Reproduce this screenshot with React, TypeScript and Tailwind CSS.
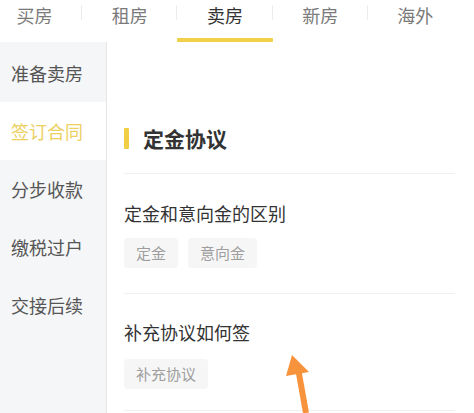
import React from "react";

const tabs = ["买房", "租房", "卖房", "新房", "海外"];
const side = ["准备卖房", "签订合同", "分步收款", "缴税过户", "交接后续"];

export default function App() {
  return (
    <div
      className="relative w-[474px] h-[413px] overflow-hidden bg-white"
      style={{ fontFamily: '"Noto Sans CJK SC", "Noto Sans", sans-serif' }}
    >
      <div className="h-[42px] overflow-hidden">
        <div className="flex h-[42px] ml-[-13px]">
          {tabs.map((t, i) => (
            <div key={t} className="relative w-[95.2px] shrink-0 flex justify-center pt-[2px]">
              <span
                className={
                  "text-[18px] leading-[26px] " + (i === 2 ? "text-[#333]" : "text-[#7a7a7a]")
                }
              >
                {t}
              </span>
              {i < 4 && (
                <div className="absolute right-0 top-[5px] h-[15px] w-px bg-[#ececec]" />
              )}
              {i === 2 && (
                <div className="absolute left-0 right-0 bottom-0 h-[4px] bg-[#f2cf48] rounded-[1px]" />
              )}
            </div>
          ))}
        </div>
      </div>
      <div className="flex h-[371px]">
        <div className="w-[107px] shrink-0 bg-[#f5f6f8] border-r border-[#e6e6e6] pt-[2px]">
          {side.map((s, i) => (
            <div
              key={s}
              className={
                "h-[58px] flex items-center pl-[11px] text-[18px] " +
                (i === 1 ? "bg-white text-[#ecd062]" : "text-[#555]")
              }
            >
              {s}
            </div>
          ))}
        </div>
        <div className="flex-1 pl-[17px] pr-[19px]">
          <div className="mt-[82px] h-[28px] flex items-center">
            <div className="w-[5px] h-[21px] bg-[#f0cf45] rounded-[1px]" />
            <div className="ml-[14px] text-[21px] font-bold text-[#333] leading-[28px]">定金协议</div>
          </div>
          <div className="mt-[21px] h-px bg-[#f0f0f0]" />
          <div className="pt-[27px] pb-[25px]">
            <div className="text-[18px] leading-[24px] text-[#333]">定金和意向金的区别</div>
            <div className="mt-[13px] flex gap-[10px]">
              <span className="h-[30px] px-[12px] flex items-center rounded-[4px] bg-[#f6f6f6] text-[15px] text-[#9e9e9e]">定金</span>
              <span className="h-[30px] px-[12px] flex items-center rounded-[4px] bg-[#f6f6f6] text-[15px] text-[#9e9e9e]">意向金</span>
            </div>
          </div>
          <div className="h-px bg-[#f0f0f0]" />
          <div className="pt-[26px] pb-[21px]">
            <div className="text-[18px] leading-[24px] text-[#333]">补充协议如何签</div>
            <div className="mt-[15px] flex gap-[10px]">
              <span className="h-[30px] px-[12px] flex items-center rounded-[4px] bg-[#f6f6f6] text-[15px] text-[#9e9e9e]">补充协议</span>
            </div>
          </div>
          <div className="h-px bg-[#f0f0f0]" />
        </div>
      </div>
      <svg
        className="absolute left-0 top-0 pointer-events-none"
        width="474"
        height="413"
        viewBox="0 0 474 413"
      >
        <line x1="298" y1="368" x2="306" y2="413" stroke="#f7933c" strokeWidth="6" />
        <polygon points="292,355 286,376 309,372" fill="#f7933c" />
      </svg>
    </div>
  );
}
